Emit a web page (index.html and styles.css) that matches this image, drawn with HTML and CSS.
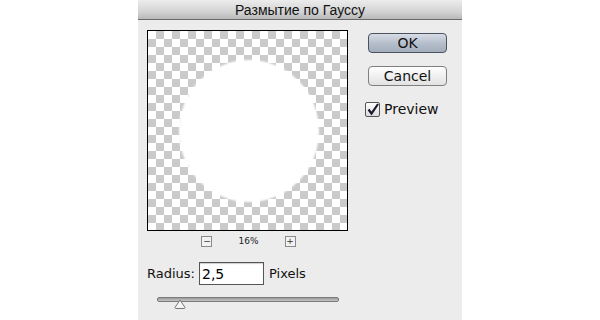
FILE: index.html
```html
<!DOCTYPE html>
<html lang="ru">
<head>
  <meta charset="UTF-8" />
  <title>Размытие по Гауссу</title>
  <link rel="stylesheet" href="styles.css">
</head>
<body>
  <div class="dialog">
    <div class="titlebar">Размытие по Гауссу</div>

    <div class="content">
      <div class="left-col">
        <div class="preview">
          <div class="blob"></div>
        </div>

        <div class="zoom-row">
          <span class="zoom-btn">−</span>
          <span class="zoom-value">16%</span>
          <span class="zoom-btn">+</span>
        </div>

        <div class="radius-row">
          <label for="radius">Radius:</label>
          <input id="radius" class="radius-input" type="text" value="2,5">
          <span>Pixels</span>
        </div>

        <div class="slider">
          <div class="slider-track"></div>
          <svg class="slider-thumb" width="12" height="10" viewBox="0 0 12 10">
            <path d="M6 1 L11 8.5 Q11 9.5 10 9.5 L2 9.5 Q1 9.5 1 8.5 Z" fill="#f4f4f4" stroke="#777" stroke-width="1"/>
          </svg>
        </div>
      </div>

      <div class="right-col">
        <button class="btn btn-default">OK</button>
        <button class="btn">Cancel</button>
        <label class="check">
          <span class="check-box">
            <svg width="13" height="13" viewBox="0 0 13 13">
              <path d="M2.5 6.5 L5.5 10.5 L12 1" fill="none" stroke="#1a1a2a" stroke-width="2.2"/>
            </svg>
          </span>
          Preview
        </label>
      </div>
    </div>
  </div>
</body>
</html>
```

FILE: styles.css
```css
body {
  margin: 0;
  background: #ffffff;
  font-family: 'DejaVu Sans', 'Liberation Sans', sans-serif;
  color: #111;
}

.dialog {
  width: 324px;
  height: 320px;
  margin: 0 auto;
  background: #ececec;
}

.titlebar {
  height: 19px;
  line-height: 20px;
  text-align: center;
  font-family: 'Liberation Sans', Arial, sans-serif;
  font-size: 14px;
  color: #111;
  background: linear-gradient(#ececec, #d4d4d4 60%, #b9b9b9);
  border-bottom: 1px solid #6a6a6a;
}

.content {
  display: flex;
  padding: 10px 0 0 9px;
}

.left-col {
  width: 201px;
}

.preview {
  width: 199px;
  height: 199px;
  border: 1px solid #000;
  background: repeating-conic-gradient(#cacaca 0 25%, #ffffff 0 50%) 0 0 / 16px 16px;
  display: flex;
  align-items: center;
  justify-content: center;
  overflow: hidden;
}

.blob {
  width: 136px;
  height: 138px;
  border-radius: 50%;
  background: #fff;
  box-shadow: 0 0 2px 2px #fff;
  margin-left: 2px;
}

.zoom-row {
  display: flex;
  align-items: center;
  justify-content: center;
  gap: 26px;
  height: 20px;
  padding-left: 2px;
}

.zoom-btn {
  width: 9px;
  height: 9px;
  border: 1px solid #8a8a8a;
  background: #f2f2f2;
  font-size: 9px;
  line-height: 8px;
  text-align: center;
  color: #333;
}

.zoom-value {
  font-size: 9px;
  color: #222;
}

.radius-row {
  display: flex;
  align-items: center;
  gap: 5px;
  margin-top: 11px;
  font-size: 13px;
}

.radius-input {
  width: 59px;
  height: 21px;
  padding: 0 2px;
  border: 1px solid #555;
  box-shadow: inset 0 1px 1px rgba(0,0,0,0.2);
  font-family: inherit;
  font-size: 14px;
  background: #fff;
  margin-left: -1px;
}

.slider {
  position: relative;
  width: 182px;
  height: 14px;
  margin: 12px 0 0 10px;
}

.slider-track {
  height: 3px;
  background: linear-gradient(#9a9a9a, #c4c4c4);
  border: 1px solid #7c7c7c;
  border-radius: 2px;
}

.slider-thumb {
  position: absolute;
  left: 17px;
  top: 2px;
}

.right-col {
  display: flex;
  flex-direction: column;
  margin-left: 20px;
  padding-top: 3px;
}

.btn {
  width: 79px;
  height: 20px;
  margin-bottom: 13px;
  border: 1px solid #7f7f7f;
  border-radius: 4px;
  background: linear-gradient(#ffffff, #f0f0f0 50%, #e2e2e2);
  font-family: 'DejaVu Sans', sans-serif;
  font-size: 14px;
  line-height: 18px;
  color: #111;
  padding: 0;
}

.btn-default {
  border-color: #4c5260;
  background: linear-gradient(#d8dde6, #b6bfcc 50%, #a3adbb);
}

.check {
  display: flex;
  align-items: center;
  gap: 4px;
  margin-left: -3px;
  margin-top: 2px;
  font-size: 14px;
}

.check-box {
  width: 13px;
  height: 13px;
  border: 1px solid #555;
  border-radius: 2px;
  background: linear-gradient(#ffffff, #dcdcdc);
  display: flex;
}
```
